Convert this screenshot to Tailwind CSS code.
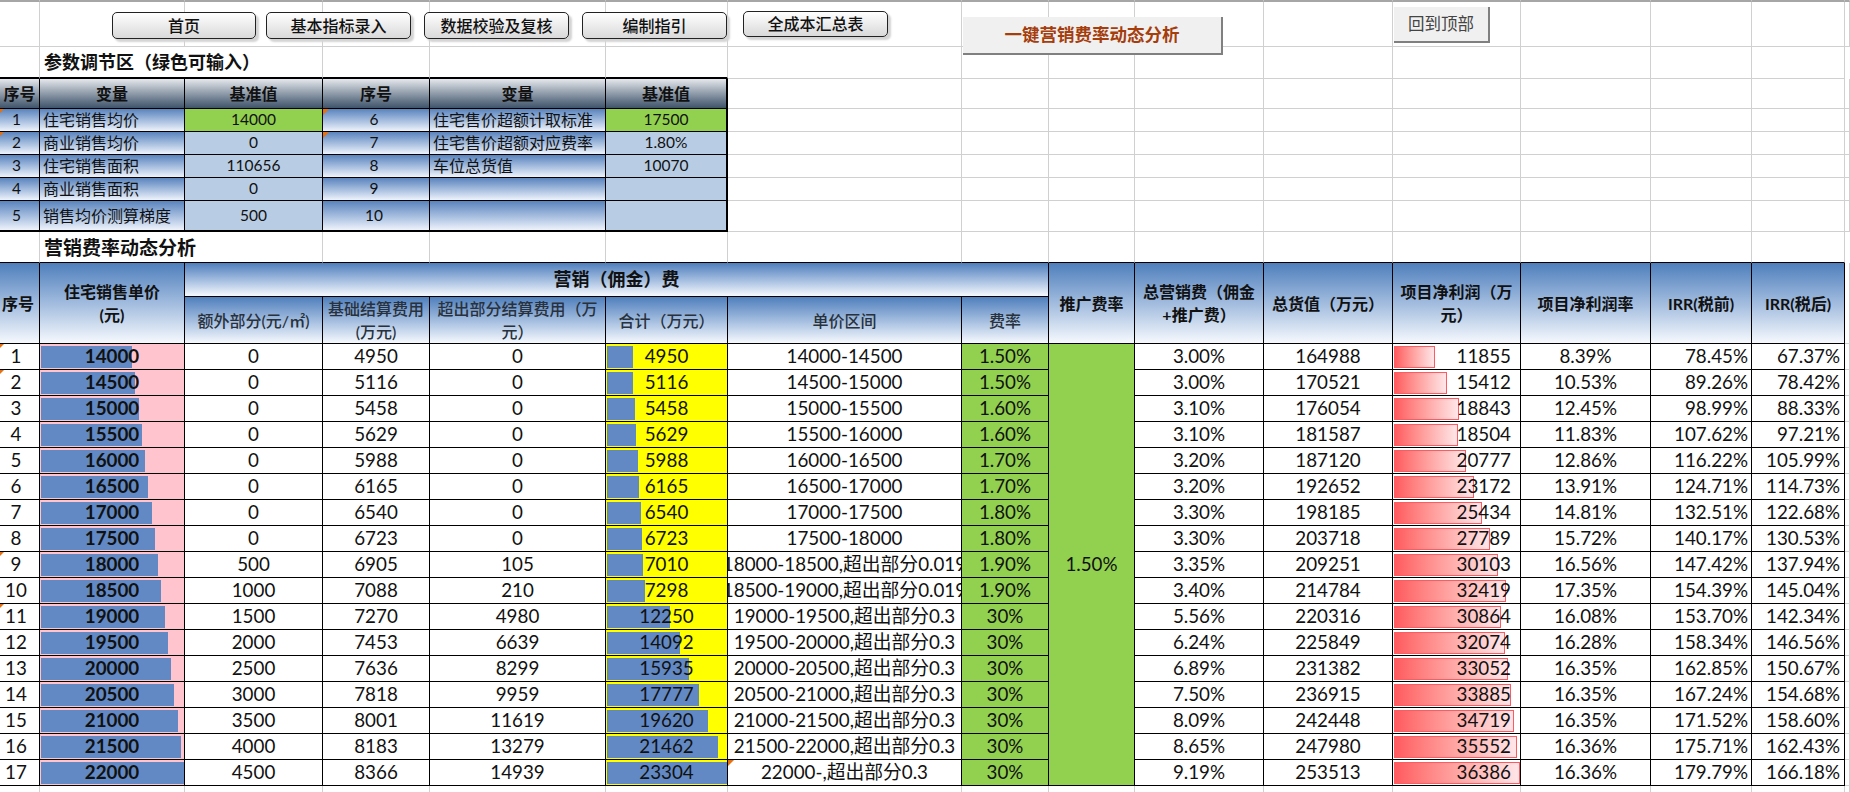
<!DOCTYPE html>
<html lang="zh-CN">
<head>
<meta charset="utf-8">
<title>营销费率动态分析</title>
<script src="https://cdn.jsdelivr.net/npm/@tailwindcss/browser@4"></script>
</head>
<body class="bg-white overflow-hidden">
<div class="relative w-[1850px] h-[792px] overflow-hidden text-[#111] font-[Lato,'Noto_Sans_CJK_SC',sans-serif]">
<table class="w-[1850px] table-fixed border-separate border-spacing-0 [&_td]:p-0 [&_td]:border-r [&_td]:border-b [&_td]:border-[#d0d0d0] [&_td]:leading-none [&_td]:align-middle">
<colgroup><col class="w-[40px]"><col class="w-[145px]"><col class="w-[138px]"><col class="w-[107px]"><col class="w-[176px]"><col class="w-[122px]"><col class="w-[234px]"><col class="w-[87px]"><col class="w-[86px]"><col class="w-[129px]"><col class="w-[129px]"><col class="w-[128px]"><col class="w-[130px]"><col class="w-[101px]"><col class="w-[93px]"><col class="w-[5px]"></colgroup>

<tbody>
<tr class="h-[2px] [&>td]:border-b-2 [&>td]:border-b-[#a6a6a6]"><td></td><td></td><td></td><td></td><td></td><td></td><td></td><td></td><td></td><td></td><td></td><td></td><td></td><td></td><td></td><td></td></tr>
<tr class="h-[45px]"><td></td><td></td><td></td><td></td><td></td><td></td><td></td><td></td><td></td><td></td><td></td><td></td><td></td><td></td><td></td><td></td></tr>
<tr class="h-[32px] [&>td:nth-child(-n+5)]:border-b-2 [&>td:nth-child(-n+5)]:border-b-black"><td></td><td colspan="2" class="pl-[4px]! text-[18px] font-bold whitespace-nowrap">参数调节区（绿色可输入）</td><td></td><td></td><td></td><td></td><td></td><td></td><td></td><td></td><td></td><td></td><td></td><td></td></tr>
</tbody>

<tbody class="text-center text-[15.5px] [&>tr>td:nth-child(-n+6)]:border-black [&>tr>td:nth-child(6)]:border-r-2 [&>tr>td:nth-child(2)]:text-left [&>tr>td:nth-child(2)]:text-[16px] [&>tr>td:nth-child(2)]:pl-[3px] [&>tr>td:nth-child(5)]:text-left [&>tr>td:nth-child(5)]:text-[16px] [&>tr>td:nth-child(5)]:pl-[3px]">
<tr class="h-[30px] text-[16px] font-bold [&>td:nth-child(-n+6)]:bg-linear-to-b [&>td:nth-child(-n+6)]:from-[#e6e9ed] [&>td:nth-child(-n+6)]:to-[#40546a] [&>td:nth-child(2)]:text-center! [&>td:nth-child(5)]:text-center! [&>td:nth-child(2)]:pl-0! [&>td:nth-child(5)]:pl-0!"><td>序号</td><td>变量</td><td>基准值</td><td>序号</td><td>变量</td><td>基准值</td><td></td><td></td><td></td><td></td><td></td><td></td><td></td><td></td><td></td><td></td></tr>
<tr class="h-[23px] [&>td:nth-child(-n+2)]:bg-linear-to-b [&>td:nth-child(-n+2)]:from-[#5a84bd] [&>td:nth-child(-n+2)]:to-[#eef3fb] [&>td:nth-child(n+4):nth-child(-n+5)]:bg-linear-to-b [&>td:nth-child(n+4):nth-child(-n+5)]:from-[#5a84bd] [&>td:nth-child(n+4):nth-child(-n+5)]:to-[#eef3fb]"><td class="relative pr-[6px]!"><b class="absolute -left-[2px] top-0 border-t-[6px] border-r-[6px] border-t-[#e8700f] border-r-transparent"></b>1</td><td>住宅销售均价</td><td class="bg-[#92d050]">14000</td><td class="relative pr-[4px]!"><b class="absolute left-0 top-0 border-t-[6px] border-r-[6px] border-t-[#e8700f] border-r-transparent"></b>6</td><td>住宅售价超额计取标准</td><td class="bg-[#92d050]">17500</td><td></td><td></td><td></td><td></td><td></td><td></td><td></td><td></td><td></td><td></td></tr>
<tr class="h-[23px] [&>td:nth-child(-n+2)]:bg-linear-to-b [&>td:nth-child(-n+2)]:from-[#5a84bd] [&>td:nth-child(-n+2)]:to-[#eef3fb] [&>td:nth-child(n+4):nth-child(-n+5)]:bg-linear-to-b [&>td:nth-child(n+4):nth-child(-n+5)]:from-[#5a84bd] [&>td:nth-child(n+4):nth-child(-n+5)]:to-[#eef3fb]"><td class="relative pr-[6px]!"><b class="absolute -left-[2px] top-0 border-t-[6px] border-r-[6px] border-t-[#e8700f] border-r-transparent"></b>2</td><td>商业销售均价</td><td class="bg-[#b8cce4]">0</td><td class="relative pr-[4px]!"><b class="absolute left-0 top-0 border-t-[6px] border-r-[6px] border-t-[#e8700f] border-r-transparent"></b>7</td><td>住宅售价超额对应费率</td><td class="bg-[#b8cce4]">1.80%</td><td></td><td></td><td></td><td></td><td></td><td></td><td></td><td></td><td></td><td></td></tr>
<tr class="h-[23px] [&>td:nth-child(-n+2)]:bg-linear-to-b [&>td:nth-child(-n+2)]:from-[#5a84bd] [&>td:nth-child(-n+2)]:to-[#eef3fb] [&>td:nth-child(n+4):nth-child(-n+5)]:bg-linear-to-b [&>td:nth-child(n+4):nth-child(-n+5)]:from-[#5a84bd] [&>td:nth-child(n+4):nth-child(-n+5)]:to-[#eef3fb]"><td class="pr-[6px]!">3</td><td>住宅销售面积</td><td class="bg-[#b8cce4]">110656</td><td class="pr-[4px]!">8</td><td>车位总货值</td><td class="bg-[#b8cce4]">10070</td><td></td><td></td><td></td><td></td><td></td><td></td><td></td><td></td><td></td><td></td></tr>
<tr class="h-[23px] [&>td:nth-child(-n+2)]:bg-linear-to-b [&>td:nth-child(-n+2)]:from-[#5a84bd] [&>td:nth-child(-n+2)]:to-[#eef3fb] [&>td:nth-child(n+4):nth-child(-n+5)]:bg-linear-to-b [&>td:nth-child(n+4):nth-child(-n+5)]:from-[#5a84bd] [&>td:nth-child(n+4):nth-child(-n+5)]:to-[#eef3fb]"><td class="pr-[6px]!">4</td><td>商业销售面积</td><td class="bg-[#b8cce4]">0</td><td class="pr-[4px]!">9</td><td></td><td class="bg-[#b8cce4]"></td><td></td><td></td><td></td><td></td><td></td><td></td><td></td><td></td><td></td><td></td></tr>
<tr class="h-[31px] [&>td:nth-child(-n+6)]:border-b-2 [&>td:nth-child(-n+2)]:bg-linear-to-b [&>td:nth-child(-n+2)]:from-[#5a84bd] [&>td:nth-child(-n+2)]:to-[#eef3fb] [&>td:nth-child(n+4):nth-child(-n+5)]:bg-linear-to-b [&>td:nth-child(n+4):nth-child(-n+5)]:from-[#5a84bd] [&>td:nth-child(n+4):nth-child(-n+5)]:to-[#eef3fb]"><td class="pr-[6px]!">5</td><td>销售均价测算梯度</td><td class="bg-[#b8cce4]">500</td><td class="pr-[4px]!">10</td><td></td><td class="bg-[#b8cce4]"></td><td></td><td></td><td></td><td></td><td></td><td></td><td></td><td></td><td></td><td></td></tr>
</tbody>

<tbody>
<tr class="h-[31px] [&>td:nth-child(-n+14)]:border-b-black"><td></td><td colspan="2" class="pl-[4px]! text-[19px] font-bold whitespace-nowrap">营销费率动态分析</td><td></td><td></td><td></td><td></td><td></td><td></td><td></td><td></td><td></td><td></td><td></td><td></td></tr>
</tbody>

<tbody class="text-center font-bold text-[16px] [&>tr>td]:border-black [&>tr>td]:leading-[23px] [&>tr>td]:bg-linear-to-b [&>tr>td]:from-[#4f7fbc] [&>tr>td]:to-[#f6f9fd]">
<tr class="h-[34px]"><td rowspan="2" class="pr-[3px]!">序号</td><td rowspan="2">住宅销售单价<br>(元)</td><td colspan="6" class="text-[18px]">营销（佣金）费</td><td rowspan="2">推广费率</td><td rowspan="2">总营销费（佣金<br>+推广费）</td><td rowspan="2">总货值（万元）</td><td rowspan="2">项目净利润（万元）</td><td rowspan="2">项目净利润率</td><td rowspan="2">IRR(税前)</td><td rowspan="2">IRR(税后)</td><td rowspan="2" class="border-[#d0d0d0]! bg-none!"></td></tr>
<tr class="h-[46px] font-medium text-[#28313c]"><td>额外部分(元/㎡)</td><td>基础结算费用(万元)</td><td>超出部分结算费用（万元）</td><td>合计（万元）</td><td>单价区间</td><td>费率</td></tr>
</tbody>

<tbody class="text-center text-[18.8px] [&>tr]:h-[26px] [&>tr>td]:border-black [&>tr>td:last-child]:border-[#d0d0d0] [&>tr>td:nth-child(1)]:pr-[7px] [&>tr>td:nth-child(1)]:relative [&>tr>td:nth-child(2)]:relative [&>tr>td:nth-child(2)]:bg-[#ffc4cd] [&>tr>td:nth-child(2)]:font-bold [&>tr>td:nth-child(6)]:relative [&>tr>td:nth-child(6)]:bg-[#ffff00] [&>tr>td:nth-child(7)]:relative [&>tr>td:nth-child(8)]:bg-[#92d050] [&>tr>td:nth-last-child(5)]:relative [&>tr>td:nth-last-child(5)]:text-right [&>tr>td:nth-last-child(5)]:pr-[9px] [&>tr>td:nth-last-child(3)]:text-right [&>tr>td:nth-last-child(3)]:pr-[3px] [&>tr>td:nth-last-child(2)]:text-right [&>tr>td:nth-last-child(2)]:pr-[4px] [&_i]:absolute [&_i]:top-[2px] [&_i]:h-[22px] [&_i]:left-[1px] [&_td:nth-child(2)>i]:bg-[#6289c3] [&_td:nth-child(6)>i]:bg-[#6289c3] [&_td:nth-last-child(5)>i]:bg-linear-to-r [&_td:nth-last-child(5)>i]:from-[#ff5a5f] [&_td:nth-last-child(5)>i]:to-[#ffe6e9] [&_td:nth-last-child(5)>i]:border [&_td:nth-last-child(5)>i]:border-[#ff5a5f] [&_span]:relative">
<tr><td><b class="absolute -left-[2px] top-0 border-t-[6px] border-r-[6px] border-t-[#e8700f] border-r-transparent"></b>1</td><td><i style="width:91px"></i><span>14000</span></td><td>0</td><td>4950</td><td>0</td><td><i style="width:25.5px"></i><span>4950</span></td><td>14000-14500</td><td>1.50%</td><td rowspan="17" class="bg-[#92d050]">1.50%</td><td>3.00%</td><td>164988</td><td><i style="width:40.9px"></i><span>11855</span></td><td>8.39%</td><td>78.45%</td><td>67.37%</td><td></td></tr>
<tr><td><b class="absolute -left-[2px] top-0 border-t-[6px] border-r-[6px] border-t-[#e8700f] border-r-transparent"></b>2</td><td><i style="width:94.3px"></i><span>14500</span></td><td>0</td><td>5116</td><td>0</td><td><i style="width:26.3px"></i><span>5116</span></td><td>14500-15000</td><td>1.50%</td><td>3.00%</td><td>170521</td><td><i style="width:53.2px"></i><span>15412</span></td><td>10.53%</td><td>89.26%</td><td>78.42%</td><td></td></tr>
<tr><td>3</td><td><i style="width:97.5px"></i><span>15000</span></td><td>0</td><td>5458</td><td>0</td><td><i style="width:28.1px"></i><span>5458</span></td><td>15000-15500</td><td>1.60%</td><td>3.10%</td><td>176054</td><td><i style="width:65px"></i><span>18843</span></td><td>12.45%</td><td>98.99%</td><td>88.33%</td><td></td></tr>
<tr><td>4</td><td><i style="width:100.8px"></i><span>15500</span></td><td>0</td><td>5629</td><td>0</td><td><i style="width:29px"></i><span>5629</span></td><td>15500-16000</td><td>1.60%</td><td>3.10%</td><td>181587</td><td><i style="width:63.9px"></i><span>18504</span></td><td>11.83%</td><td>107.62%</td><td>97.21%</td><td></td></tr>
<tr><td>5</td><td><i style="width:104px"></i><span>16000</span></td><td>0</td><td>5988</td><td>0</td><td><i style="width:30.8px"></i><span>5988</span></td><td>16000-16500</td><td>1.70%</td><td>3.20%</td><td>187120</td><td><i style="width:71.7px"></i><span>20777</span></td><td>12.86%</td><td>116.22%</td><td>105.99%</td><td></td></tr>
<tr><td>6</td><td><i style="width:107.3px"></i><span>16500</span></td><td>0</td><td>6165</td><td>0</td><td><i style="width:31.7px"></i><span>6165</span></td><td>16500-17000</td><td>1.70%</td><td>3.20%</td><td>192652</td><td><i style="width:80px"></i><span>23172</span></td><td>13.91%</td><td>124.71%</td><td>114.73%</td><td></td></tr>
<tr><td>7</td><td><i style="width:110.5px"></i><span>17000</span></td><td>0</td><td>6540</td><td>0</td><td><i style="width:33.7px"></i><span>6540</span></td><td>17000-17500</td><td>1.80%</td><td>3.30%</td><td>198185</td><td><i style="width:87.8px"></i><span>25434</span></td><td>14.81%</td><td>132.51%</td><td>122.68%</td><td></td></tr>
<tr><td>8</td><td><i style="width:113.8px"></i><span>17500</span></td><td>0</td><td>6723</td><td>0</td><td><i style="width:34.6px"></i><span>6723</span></td><td>17500-18000</td><td>1.80%</td><td>3.30%</td><td>203718</td><td><i style="width:95.9px"></i><span>27789</span></td><td>15.72%</td><td>140.17%</td><td>130.53%</td><td></td></tr>
<tr><td><b class="absolute -left-[2px] top-0 border-t-[6px] border-r-[6px] border-t-[#e8700f] border-r-transparent"></b>9</td><td><i style="width:117px"></i><span>18000</span></td><td>500</td><td>6905</td><td>105</td><td><i style="width:36.1px"></i><span>7010</span></td><td><div class="flex justify-center overflow-hidden whitespace-nowrap">18000-18500,超出部分0.019</div></td><td>1.90%</td><td>3.35%</td><td>209251</td><td><i style="width:103.9px"></i><span>30103</span></td><td>16.56%</td><td>147.42%</td><td>137.94%</td><td></td></tr>
<tr><td>10</td><td><i style="width:120.3px"></i><span>18500</span></td><td>1000</td><td>7088</td><td>210</td><td><i style="width:37.6px"></i><span>7298</span></td><td><div class="flex justify-center overflow-hidden whitespace-nowrap">18500-19000,超出部分0.019</div></td><td>1.90%</td><td>3.40%</td><td>214784</td><td><i style="width:111.9px"></i><span>32419</span></td><td>17.35%</td><td>154.39%</td><td>145.04%</td><td></td></tr>
<tr><td><b class="absolute -left-[2px] top-0 border-t-[6px] border-r-[6px] border-t-[#e8700f] border-r-transparent"></b>11</td><td><i style="width:123.5px"></i><span>19000</span></td><td>1500</td><td>7270</td><td>4980</td><td><i style="width:63.1px"></i><span>12250</span></td><td>19000-19500,超出部分0.3</td><td>30%</td><td>5.56%</td><td>220316</td><td><i style="width:106.5px"></i><span>30864</span></td><td>16.08%</td><td>153.70%</td><td>142.34%</td><td></td></tr>
<tr><td>12</td><td><i style="width:126.8px"></i><span>19500</span></td><td>2000</td><td>7453</td><td>6639</td><td><i style="width:72.6px"></i><span>14092</span></td><td>19500-20000,超出部分0.3</td><td>30%</td><td>6.24%</td><td>225849</td><td><i style="width:110.7px"></i><span>32074</span></td><td>16.28%</td><td>158.34%</td><td>146.56%</td><td></td></tr>
<tr><td>13</td><td><i style="width:130px"></i><span>20000</span></td><td>2500</td><td>7636</td><td>8299</td><td><i style="width:82.1px"></i><span>15935</span></td><td>20000-20500,超出部分0.3</td><td>30%</td><td>6.89%</td><td>231382</td><td><i style="width:114.1px"></i><span>33052</span></td><td>16.35%</td><td>162.85%</td><td>150.67%</td><td></td></tr>
<tr><td>14</td><td><i style="width:133.3px"></i><span>20500</span></td><td>3000</td><td>7818</td><td>9959</td><td><i style="width:91.5px"></i><span>17777</span></td><td>20500-21000,超出部分0.3</td><td>30%</td><td>7.50%</td><td>236915</td><td><i style="width:117px"></i><span>33885</span></td><td>16.35%</td><td>167.24%</td><td>154.68%</td><td></td></tr>
<tr><td>15</td><td><i style="width:136.5px"></i><span>21000</span></td><td>3500</td><td>8001</td><td>11619</td><td><i style="width:101px"></i><span>19620</span></td><td>21000-21500,超出部分0.3</td><td>30%</td><td>8.09%</td><td>242448</td><td><i style="width:119.8px"></i><span>34719</span></td><td>16.35%</td><td>171.52%</td><td>158.60%</td><td></td></tr>
<tr><td>16</td><td><i style="width:139.8px"></i><span>21500</span></td><td>4000</td><td>8183</td><td>13279</td><td><i style="width:110.5px"></i><span>21462</span></td><td>21500-22000,超出部分0.3</td><td>30%</td><td>8.65%</td><td>247980</td><td><i style="width:122.7px"></i><span>35552</span></td><td>16.36%</td><td>175.71%</td><td>162.43%</td><td></td></tr>
<tr><td>17</td><td><i style="width:143px"></i><span>22000</span></td><td>4500</td><td>8366</td><td>14939</td><td><i style="width:120px"></i><span>23304</span></td><td><b class="absolute left-0 top-0 border-t-[6px] border-r-[6px] border-t-[#e8700f] border-r-transparent"></b>22000-,超出部分0.3</td><td>30%</td><td>9.19%</td><td>253513</td><td><i style="width:125.6px"></i><span>36386</span></td><td>16.36%</td><td>179.79%</td><td>166.18%</td><td></td></tr>
</tbody>

<tbody class="[&_td]:border-b-0">
<tr class="h-[7px]"><td></td><td></td><td></td><td></td><td></td><td></td><td></td><td></td><td></td><td></td><td></td><td></td><td></td><td></td><td></td><td></td></tr>
</tbody>
</table>

<button class="absolute left-[112px] top-[12px] w-[144px] h-[27px] flex items-center justify-center rounded-[5px] border border-[#222] bg-linear-to-b from-white to-[#d9d9d9] shadow-[3px_3px_2px_#d4d4d4] text-[16px] font-medium">首页</button>
<button class="absolute left-[266px] top-[12px] w-[145px] h-[27px] flex items-center justify-center rounded-[5px] border border-[#222] bg-linear-to-b from-white to-[#d9d9d9] shadow-[3px_3px_2px_#d4d4d4] text-[16px] font-medium">基本指标录入</button>
<button class="absolute left-[424px] top-[12px] w-[145px] h-[27px] flex items-center justify-center rounded-[5px] border border-[#222] bg-linear-to-b from-white to-[#d9d9d9] shadow-[3px_3px_2px_#d4d4d4] text-[16px] font-medium">数据校验及复核</button>
<button class="absolute left-[582px] top-[12px] w-[145px] h-[27px] flex items-center justify-center rounded-[5px] border border-[#222] bg-linear-to-b from-white to-[#d9d9d9] shadow-[3px_3px_2px_#d4d4d4] text-[16px] font-medium">编制指引</button>
<button class="absolute left-[743px] top-[11px] w-[145px] h-[26px] flex items-center justify-center rounded-[5px] border border-[#222] bg-linear-to-b from-white to-[#d9d9d9] shadow-[3px_3px_2px_#d4d4d4] text-[16px] font-medium">全成本汇总表</button>
<button class="absolute left-[963px] top-[17px] w-[260px] h-[38px] flex items-center justify-center bg-[#f0f0f0] border-r-2 border-b-2 border-[#808080] text-[17.5px] font-bold text-[#a53d0c]">一键营销费率动态分析</button>
<button class="absolute left-[1394px] top-[7px] w-[96px] h-[36px] flex items-center justify-center bg-[#f0f0f0] border-r-2 border-b-2 border-[#808080] text-[16.5px] text-[#444]">回到顶部</button>
</div>
</body>
</html>
